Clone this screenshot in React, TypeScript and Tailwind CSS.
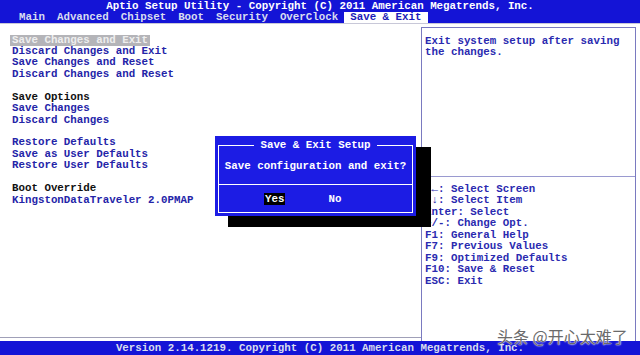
import React from "react";

const mono = { fontFamily: '"Liberation Mono", "DejaVu Sans Mono", monospace' };

const tabs = ["Main", "Advanced", "Chipset", "Boot", "Security", "OverClock"];

export default function App() {
  return (
    <div
      className="relative w-[640px] h-[355px] overflow-hidden bg-white flex flex-col font-bold text-[10.8px]"
      style={mono}
    >
      {/* Header */}
      <div className="bg-[#1414d6] h-[23px] flex flex-col text-white">
        <div className="h-[12px] leading-[12px] text-center whitespace-pre">
          Aptio Setup Utility - Copyright (C) 2011 American Megatrends, Inc.
        </div>
        <div className="h-[11px] flex items-end pl-[13px] leading-[11px]">
          {tabs.map((t) => (
            <span key={t} className="px-[6px] whitespace-pre text-[#d8dcf0]">
              {t}
            </span>
          ))}
          <span className="px-[6px] bg-white text-[#1c1cb8] whitespace-pre h-[11px]">Save &amp; Exit</span>
        </div>
      </div>

      {/* Main */}
      <div className="flex-1 flex border-t border-[#c8c8d8]">
        <div className="w-[421px] border-b border-[#a0a0b8] mb-[3px] pt-[10.5px] leading-[11.43px] text-[#2424a8] whitespace-pre">
          <div className="pl-[10px]">
            <span className="bg-[#b4b4b8] text-[#eeeeee] px-[2px] inline-block">Save Changes and Exit</span>
          </div>
          <div className="pl-[12px]">Discard Changes and Exit</div>
          <div className="pl-[12px]">Save Changes and Reset</div>
          <div className="pl-[12px]">Discard Changes and Reset</div>
          <div className="pl-[12px]">&nbsp;</div>
          <div className="pl-[12px] text-[#101010]">Save Options</div>
          <div className="pl-[12px]">Save Changes</div>
          <div className="pl-[12px]">Discard Changes</div>
          <div className="pl-[12px]">&nbsp;</div>
          <div className="pl-[12px]">Restore Defaults</div>
          <div className="pl-[12px]">Save as User Defaults</div>
          <div className="pl-[12px]">Restore User Defaults</div>
          <div className="pl-[12px]">&nbsp;</div>
          <div className="pl-[12px] text-[#101010]">Boot Override</div>
          <div className="pl-[12px]">KingstonDataTraveler 2.0PMAP</div>
        </div>
        <div className="w-[215px] mt-[3px] border-l border-r border-t border-[#7a7ac0] flex flex-col text-[#2a2ab0] leading-[11.43px] whitespace-pre">
          <div className="h-[148px] pt-[8px] pl-[3px]">
            <div>Exit system setup after saving</div>
            <div>the changes.</div>
          </div>
          <div className="border-t border-[#9a9ad0] pt-[7px] pl-[3px]">
            <div>→←: Select Screen</div>
            <div>↑↓: Select Item</div>
            <div>Enter: Select</div>
            <div>+/-: Change Opt.</div>
            <div>F1: General Help</div>
            <div>F7: Previous Values</div>
            <div>F9: Optimized Defaults</div>
            <div>F10: Save &amp; Reset</div>
            <div>ESC: Exit</div>
          </div>
        </div>
        <div className="flex-1" />
      </div>

      {/* Bottom bar */}
      <div className="bg-[#1414d6] h-[14px] leading-[14px] text-center text-[#d8dcee] whitespace-pre">
        Version 2.14.1219. Copyright (C) 2011 American Megatrends, Inc.
      </div>

      {/* Watermark */}
      <div
        className="absolute left-[497px] top-[328px] text-[16px] leading-none font-normal text-[#6a6a6a] whitespace-pre [text-shadow:0_0_2px_#ffffff,0_0_1px_#ffffff]"
        style={{ fontFamily: '"Noto Sans CJK SC", "Noto Sans", sans-serif' }}
      >
        头条 @开心太难了
      </div>

      {/* Dialog shadow */}
      <div className="absolute left-[228px] top-[147px] w-[203px] h-[80px] bg-black" />
      {/* Dialog */}
      <div className="absolute left-[215px] top-[136px] w-[201px] h-[80px] bg-[#1c1ce4] p-[3px]">
        <div className="relative border border-white mt-[6px] h-[68px] flex flex-col text-white">
          <div className="absolute -top-[7px] left-0 right-0 flex justify-center">
            <span className="bg-[#1c1ce4] px-[6px] leading-[12px] whitespace-pre">Save &amp; Exit Setup</span>
          </div>
          <div className="h-[38px] flex items-center justify-center pt-[2px] whitespace-pre">
            Save configuration and exit?
          </div>
          <div className="border-t border-white flex-1 flex items-center pl-[45px] gap-[43px] pt-[1px]">
            <span className="bg-black px-[1px] leading-[12px]">Yes</span>
            <span className="leading-[12px]">No</span>
          </div>
        </div>
      </div>
    </div>
  );
}
